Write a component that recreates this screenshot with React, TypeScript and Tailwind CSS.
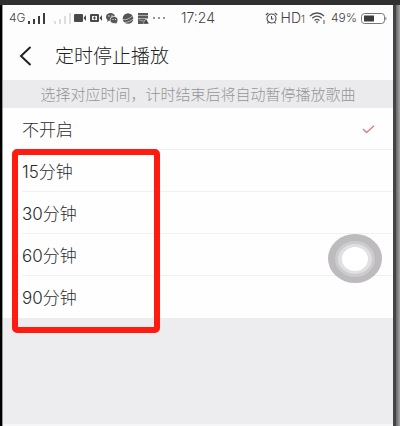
import { useState } from 'react';

const options = ['不开启', '15分钟', '30分钟', '60分钟', '90分钟'];

const signalBars = [
    { x: 0, y: 8, h: 3 },
    { x: 5, y: 6, h: 5 },
    { x: 10, y: 3, h: 8 },
    { x: 15, y: 0, h: 11 },
];

const Signal = ({ className }: { className: string }) => (
    <svg width="17" height="11" viewBox="0 0 17 11" fill="currentColor" className={className}>
        {signalBars.map((bar) => (
            <rect key={bar.x} x={bar.x} y={bar.y} width="2" height={bar.h} />
        ))}
    </svg>
);

const StatusBar = () => (
    <div className="flex h-[26px] items-center justify-between px-[6px] text-[#444]">
        <div className="flex w-[158px] items-center">
            <span className="w-[19px] text-[12px] leading-4">4G</span>
            <Signal className="text-[#3c3c3c]" />
            <Signal className="ml-[9px] text-[#dedede]" />
            <svg width="12" height="8" viewBox="0 0 12 8" fill="#4a4a4a" className="ml-[3px]">
                <rect width="9" height="8" rx="1" />
                <path d="M9.5 4 12 1v6z" />
            </svg>
            <svg width="12" height="8" viewBox="0 0 12 8" className="ml-[4px]">
                <rect width="9" height="8" rx="1" fill="#4a4a4a" />
                <path d="M9.5 4 12 1v6z" fill="#4a4a4a" />
                <rect x="2" y="2" width="5" height="4" fill="#f4f4f4" />
                <path d="M4 2.500h1v1h1v1H5v1H4v-1H3v-1h1z" fill="#4a4a4a" />
            </svg>
            <svg width="12" height="11" viewBox="0 0 12 11" className="ml-[4px]">
                <ellipse cx="4.500" cy="4" rx="4.500" ry="4" fill="#555" />
                <path d="M1 9l1-3 2 1z" fill="#555" />
                <ellipse cx="8" cy="7" rx="4" ry="3.600" fill="#555" stroke="#fff" strokeWidth=".7" />
                <path d="m10 11-1-2 2-.5z" fill="#555" />
                <circle cx="3" cy="3" r=".7" fill="#fff" />
                <circle cx="6" cy="3" r=".7" fill="#fff" />
                <circle cx="7" cy="6.500" r=".6" fill="#fff" />
                <circle cx="9.500" cy="6.500" r=".6" fill="#fff" />
            </svg>
            <svg width="12" height="11" viewBox="0 0 12 11" className="ml-[4px]">
                <circle cx="6" cy="5.500" r="5.300" fill="#555" />
                <path d="M.5 6.500C5 7.500 8 5 11 2.500M2 9.500c4 0 7-1.500 9.500-4" stroke="#d5d5d5" strokeWidth=".8" fill="none" />
            </svg>
            <svg width="12" height="11" viewBox="0 0 12 11" className="ml-[3px]">
                <path d="M1 0h10v2.500H1zM1 3h10v2.500H1zM1 6h7v5H1z" fill="#5a5a5a" />
                <path d="M2 6.500C5 8.500 8 8.500 10 6" stroke="#bbb" strokeWidth=".8" fill="none" />
                <path d="m9 5.500 3 5.500H6z" fill="#444" stroke="#fff" strokeWidth=".4" />
            </svg>
            <svg width="12" height="2" viewBox="0 0 12 2" fill="#666" className="ml-[4px]">
                <circle cx="1" cy="1" r=".9" />
                <circle cx="6" cy="1" r=".9" />
                <circle cx="11" cy="1" r=".9" />
            </svg>
        </div>
        <span className="text-[14px] leading-4">17:24</span>
        <div className="flex w-[158px] items-center justify-end">
            <svg width="13" height="12" viewBox="0 0 13 12" fill="none" stroke="#484848" strokeWidth="1.100">
                <circle cx="6.500" cy="6.500" r="4.500" />
                <path d="M.8 3 3.300.8M12.200 3 9.700.8M6.500 4v3h2M3.500 10l-1 1.500M9.500 10l1 1.500" />
            </svg>
            <span className="ml-[3px] flex items-baseline text-[14px] leading-4">
                HD<span className="text-[10px]">1</span>
            </span>
            <svg width="17" height="12" viewBox="0 0 17 12" fill="none" stroke="#555" strokeWidth="1.300" className="ml-[4px]">
                <path d="M1 4c4-4 10-4 14 0M3.200 6.300c3-2.700 6.600-2.700 9.600 0M5.500 8.500c1.600-1.400 3.400-1.400 5 0" />
                <path d="m8 11.500-1.500-2h3z" fill="#555" stroke="none" />
                <path d="M15 8v4" strokeWidth="1" />
            </svg>
            <span className="ml-[5px] text-[12px] leading-4">49%</span>
            <svg width="26" height="11" viewBox="0 0 26 11" className="ml-[4px]">
                <rect x=".5" y=".5" width="23" height="10" rx="3" fill="#fff" stroke="#777" />
                <rect x="3" y="2.500" width="10" height="6" fill="#3c3c3c" />
                <path d="M24.500 3.500c1.300.5 1.300 3.500 0 4z" fill="#777" />
            </svg>
        </div>
    </div>
);

const App = () => {
    const [selected, setSelected] = useState('不开启');

    return (
        <div className="min-h-screen flex flex-col bg-[#ededef] border-t-[5px] border-t-[#303030] font-light font-[Inter,'Noto_Sans_CJK_SC',sans-serif]">
            <div className="flex grow">
                <div className="w-[3px] shrink-0 bg-black border-r border-[#999]" />
                <div className="relative grow min-w-0 border-b-2 border-[#f6f6f7]">
                    <header className="bg-[#fdfdfd]">
                        <StatusBar />
                        <div className="flex h-[49px] items-center pl-[16px]">
                            <button type="button" aria-label="返回" className="w-[36px]">
                                <svg width="13" height="20" viewBox="0 0 13 20" fill="none" stroke="#222" strokeWidth="2">
                                    <path d="M11.500 1 2 10l9.500 9" />
                                </svg>
                            </button>
                            <h1 className="pt-[2px] text-[19px] leading-6 font-light text-[#222]">定时停止播放</h1>
                        </div>
                    </header>
                    <p className="h-[28px] bg-[#ebebed] pt-[2px] text-center text-[15px] leading-[26px] text-[#959595] whitespace-nowrap">
                        选择对应时间，计时结束后将自动暂停播放歌曲
                    </p>

                    <div className="relative">
                        <div className="bg-[#fefefe] pl-[19px]">
                            {options.map((option) => (
                                <label
                                    key={option}
                                    className="flex h-[42px] items-center justify-between border-b border-[#f1f1f2] pt-[2px] pr-[18px] text-[17px] leading-6 text-[#2c2c2c] last:border-b-0"
                                >
                                    <span>{option}</span>
                                    <input
                                        type="radio"
                                        name="timer"
                                        value={option}
                                        checked={selected === option}
                                        onChange={() => setSelected(option)}
                                        className="sr-only"
                                    />
                                    {selected === option && (
                                        <svg width="13" height="9" viewBox="0 0 13 9" fill="none" stroke="#e27f80" strokeWidth="1.500">
                                            <path d="m1 4 3.500 3.500L12 .8" />
                                        </svg>
                                    )}
                                </label>
                            ))}
                        </div>

                        {/* highlight around the timed options */}
                        <div className="pointer-events-none absolute top-[41px] -bottom-[15px] left-[9px] w-[148px] rounded-[5px] border-[6px] border-[#ff1b10]" />

                        {/* floating assistive button */}
                        <button
                            type="button"
                            aria-label="悬浮球"
                            className="absolute top-[126px] right-[11px] flex h-[49px] w-[54px] items-center justify-center rounded-[50%] bg-[#bdbbbe]"
                        >
                            <span className="flex h-[36px] w-[40px] items-center justify-center rounded-[50%] bg-[#cccbcd]">
                                <span className="flex h-[30px] w-[34px] items-center justify-center rounded-[50%] bg-[#e0dfe1]">
                                    <span className="h-[24px] w-[26px] rounded-[50%] bg-white" />
                                </span>
                            </span>
                        </button>
                    </div>
                </div>
                <div className="flex w-[7px] shrink-0">
                    <div className="w-[3px] bg-[#444446]" />
                    <div className="grow bg-linear-to-r from-[#666668] to-[#a5a5a7]" />
                </div>
            </div>
        </div>
    );
};

export default App;
